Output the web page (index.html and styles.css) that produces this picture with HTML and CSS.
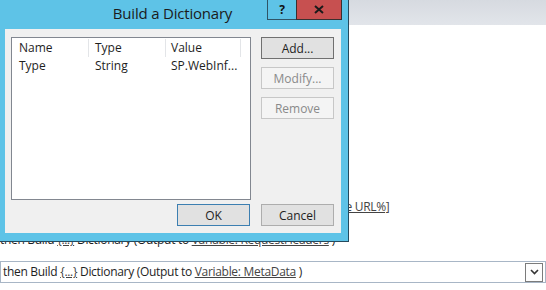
FILE: index.html
```html
<!DOCTYPE html>
<html lang="en">
<head>
    <meta charset="UTF-8">
    <title>Build a Dictionary</title>
    <link rel="stylesheet" href="styles.css">
</head>
<body>
    <div class="ribbon"></div>
    <div class="workflow">
        <div class="step step-url">then Set <span class="link">Variable: SiteUrl</span> to <span class="link">[%Workflow Context:Current Site URL%]</span></div>
        <div class="step">then Build <span class="link">{...}</span> Dictionary (Output to <span class="link">Variable: RequestHeaders</span> )</div>
        <div class="step step-active">
            <span>then Build <span class="link">{...}</span> Dictionary (Output to <span class="link">Variable: MetaData</span> )</span>
            <span class="drop">
                <svg width="9" height="6" viewBox="0 0 9 6"><path d="M1 1 L4.5 4.5 L8 1" fill="none" stroke="#333" stroke-width="1.6"/></svg>
            </span>
        </div>
    </div>

    <div class="dialog">
        <div class="title">Build a Dictionary</div>
        <div class="caption-buttons">
            <div class="cap-help">?</div>
            <div class="cap-close">
                <svg width="10" height="9" viewBox="0 0 10 9"><path d="M1 1 L9 8 M9 1 L1 8" stroke="#1a1a1a" stroke-width="2"/></svg>
            </div>
        </div>
        <div class="client">
            <div class="top-row">
                <div class="listview">
                    <div class="lv-header">
                        <div class="col col-name">Name</div>
                        <div class="col col-type">Type</div>
                        <div class="col col-value">Value</div>
                    </div>
                    <div class="lv-row">
                        <div class="col col-name">Type</div>
                        <div class="col col-type">String</div>
                        <div class="col col-value">SP.WebInf...</div>
                    </div>
                </div>
                <div class="side-buttons">
                    <button class="btn btn-focus">Add...</button>
                    <button class="btn" disabled>Modify...</button>
                    <button class="btn" disabled>Remove</button>
                </div>
            </div>
            <div class="bottom-row">
                <button class="btn btn-default">OK</button>
                <button class="btn">Cancel</button>
            </div>
        </div>
    </div>
</body>
</html>
```

FILE: styles.css
```css
body {
    margin: 0;
    font-family: "Open Sans", "Noto Sans", sans-serif;
    font-size: 12px;
    color: #1e1e1e;
    background-color: #fff;
    overflow: hidden;
}
.ribbon {
    height: 25px;
    background: linear-gradient(#d6dae0, #e2e5ea);
}
.workflow {
    padding-top: 172px;
    letter-spacing: -0.3px;
}
.step {
    height: 20px;
    line-height: 20px;
    white-space: nowrap;
    margin-bottom: 13px;
}
.step-url {
    padding-left: 30px;
}
.link {
    text-decoration: underline;
    color: #444;
}
.step-active {
    display: flex;
    justify-content: space-between;
    align-items: center;
    height: 20px;
    border: 1px solid #a8b6c6;
    padding-left: 2px;
    margin-top: -2px;
}
.drop {
    display: flex;
    align-items: center;
    justify-content: center;
    width: 16px;
    height: 17px;
    border: 1px solid #7b7b7b;
    margin-right: 2px;
    background-color: #fdfdfd;
}

/* dialog */
.dialog {
    position: absolute;
    left: -3px;
    top: 0;
    width: 336px;
    padding: 29px 7px 8px 8px;
    background-color: #5ec3e7;
    border-right: 1px solid #254a5e;
    border-bottom: 1px solid #254a5e;
}
.title {
    position: absolute;
    top: 3px;
    left: 0;
    right: 0;
    text-align: center;
    font-size: 15px;
    letter-spacing: -0.2px;
    color: #1b1b1b;
}
.caption-buttons {
    position: absolute;
    top: 0;
    right: 6px;
    display: flex;
}
.cap-help {
    width: 28px;
    height: 19px;
    border-left: 1px solid #2f5466;
    border-bottom: 1px solid #2f5466;
    text-align: center;
    font-weight: bold;
    font-size: 12px;
    line-height: 20px;
    color: #111;
}
.cap-close {
    width: 44px;
    height: 19px;
    background-color: #c75050;
    border-left: 1px solid #3a3030;
    border-right: 1px solid #3a3030;
    border-bottom: 1px solid #3a3030;
    display: flex;
    align-items: center;
    justify-content: center;
}
.client {
    background-color: #f0f0f0;
    padding: 8px 7px 7px 6px;
}
.top-row {
    display: flex;
    gap: 10px;
}
.listview {
    width: 238px;
    height: 161px;
    border: 1px solid #828790;
    background-color: #fff;
}
.lv-header {
    display: flex;
    height: 18px;
    line-height: 18px;
    padding-top: 1px;
}
.lv-header .col {
    border-right: 1px solid #e3e5e8;
}
.lv-row {
    display: flex;
    height: 17px;
    line-height: 17px;
}
.col {
    padding-left: 7px;
    box-sizing: border-box;
    white-space: nowrap;
}
.col-name {
    width: 77px;
}
.col-type {
    width: 77px;
    padding-left: 6px;
}
.col-value {
    width: 75px;
    padding-left: 5px;
}
.side-buttons {
    display: flex;
    flex-direction: column;
    gap: 8px;
}
.btn {
    width: 73px;
    height: 22px;
    padding: 0;
    font-family: "Open Sans", "Noto Sans", sans-serif;
    font-size: 12px;
    color: #1e1e1e;
    background-color: #e1e1e1;
    border: 1px solid #adadad;
}
.btn-focus {
    border-color: #707070;
}
.btn-default {
    border-color: #3c7fb1;
}
.btn:disabled {
    background-color: #f4f4f4;
    border-color: #c7c7c7;
    color: #8a8a8a;
}
.bottom-row {
    display: flex;
    justify-content: flex-end;
    gap: 11px;
    margin-top: 4px;
}
```
